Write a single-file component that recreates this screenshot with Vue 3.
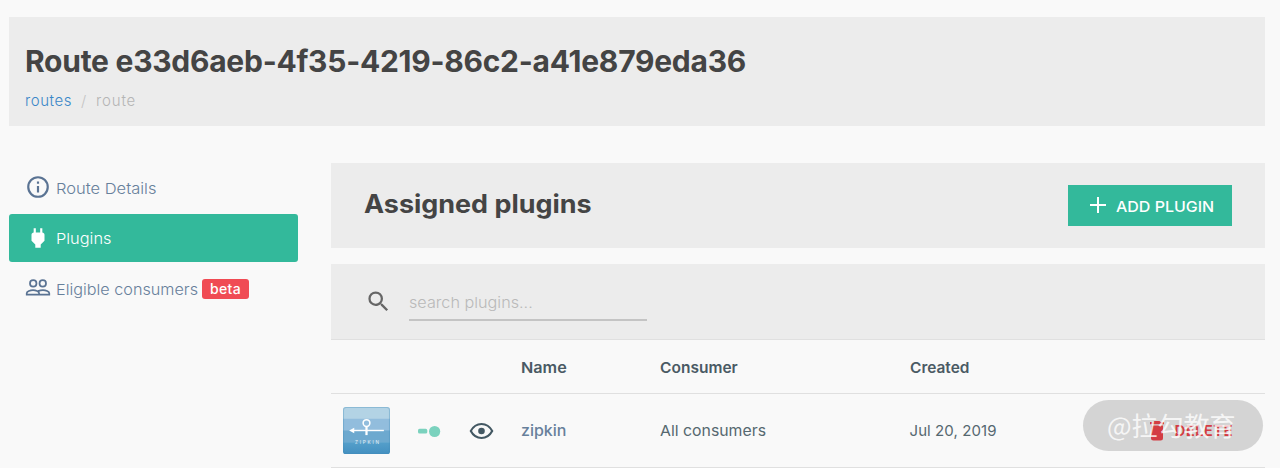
<script setup>
const columns = ['Name', 'Consumer', 'Created']
</script>

<template>
  <div class="page">
    <header class="page-head">
      <h1>Route e33d6aeb-4f35-4219-86c2-a41e879eda36</h1>
      <nav class="crumbs">
        <a class="crumb-link">routes</a>
        <span class="slash">/</span>
        <span class="crumb-current">route</span>
      </nav>
    </header>

    <div class="body">
      <aside class="side">
        <a class="item">
          <svg class="icon" viewBox="0 0 24 24">
            <path d="M11 17h2v-6h-2zM12 2a10 10 0 1 0 0 20 10 10 0 0 0 0-20zm0 18a8 8 0 1 1 0-16 8 8 0 0 1 0 16zM11 9h2V7h-2z" />
          </svg>
          <span class="label t-details">Route Details</span>
        </a>
        <a class="item active">
          <svg class="icon" viewBox="0 0 24 24">
            <path d="M16 7V3h-2v4h-4V3H8v4C7 7 6 8 6 9v5.500L9.500 18v3h5v-3l3.500-3.500V9c0-1-1-2-2-2z" />
          </svg>
          <span class="label t-plugins">Plugins</span>
        </a>
        <a class="item">
          <svg class="icon" viewBox="0 0 24 24" fill="none" stroke="currentColor" stroke-width="1.600">
            <circle cx="7.600" cy="7.800" r="3" />
            <circle cx="16.400" cy="7.800" r="3" />
            <path d="M1.600 18.200v-1.400c0-1.700 3.300-2.900 5.800-2.900s5.600 1.200 5.600 2.900v1.400zM13 18.200h9.400v-1.400c0-1.700-3.300-2.900-5.800-2.900-1.500 0-3.200.4-4.500 1" />
          </svg>
          <span class="label t-eligible">Eligible consumers</span>
          <span class="badge">beta</span>
        </a>
      </aside>

      <main class="main">
        <section class="panel-head">
          <h2>Assigned plugins</h2>
          <button class="add">
            <svg viewBox="0 0 16 16" fill="none" stroke="currentColor" stroke-width="2"><path d="M8 0v16M0 8h16" /></svg>
            <span>ADD PLUGIN</span>
          </button>
        </section>

        <section class="search">
          <svg class="glass" viewBox="0 0 24 24">
            <path d="M15.500 14h-.79l-.28-.27A6.470 6.470 0 0 0 16 9.500 6.500 6.500 0 1 0 9.500 16c1.610 0 3.090-.59 4.230-1.570l.27.28v.79l5 4.990L20.490 19l-4.990-5zm-6 0a4.500 4.500 0 1 1 0-9 4.500 4.500 0 0 1 0 9z" />
          </svg>
          <div class="field"><span>search plugins...</span></div>
        </section>

        <div class="row row-head">
          <span v-for="c in columns" :key="c" :class="'h-' + c.toLowerCase()">{{ c }}</span>
        </div>

        <div class="row row-data">
          <svg class="logo" viewBox="0 0 46 46">
            <defs>
              <clipPath id="logo-clip"><rect width="46" height="46" rx="2.500" /></clipPath>
              <linearGradient id="logo-base" x1="0" y1="0" x2="0" y2="1">
                <stop offset="0" stop-color="#559fca" /><stop offset="1" stop-color="#438fc0" />
              </linearGradient>
            </defs>
            <g clip-path="url(#logo-clip)">
              <rect width="46" height="12" fill="#b3d3e5" />
              <rect y="11.500" width="46" height="12" fill="#92bddd" />
              <rect y="23" width="46" height="12" fill="#6da9cf" />
              <rect y="34.500" width="46" height="12" fill="url(#logo-base)" />
            </g>
            <rect x=".5" y=".5" width="45" height="45" rx="2.500" fill="none" stroke="#418bb8" stroke-opacity=".35" />
            <g fill="none" stroke="#fff">
              <circle cx="23" cy="15.700" r="3.300" stroke-width="1.500" />
              <path d="M23 19v8.500" stroke-width="2.200" />
              <path d="M9 23h31" stroke-width="1.400" />
            </g>
            <path d="M6 23l5-2.800v5.600z" fill="#fff" />
            <text x="11.700" y="36.300" textLength="23.500" font-size="4.600" fill="#e3f1f8" font-family="Inter, sans-serif">ZIPKIN</text>
          </svg>
          <svg class="toggle" viewBox="0 0 24 14">
            <rect x="0" y="4.800" width="9.300" height="4.800" rx="1.600" />
            <circle cx="16.600" cy="7.500" r="5.600" />
          </svg>
          <svg class="eye" viewBox="0 0 24 18" fill="none" stroke="currentColor" stroke-width="2.100">
            <path d="M1.300 9C3.600 4.700 7.300 2 12 2s8.400 2.700 10.700 7c-2.300 4.300-6 7-10.700 7S3.600 13.300 1.300 9z" />
            <circle cx="12" cy="9" r="3.300" fill="currentColor" stroke="none" />
          </svg>
          <span class="d-name">zipkin</span>
          <span class="d-consumer">All consumers</span>
          <span class="d-created">Jul 20, 2019</span>
          <a class="delete">
            <svg viewBox="0 0 14 20"><path d="M4.500 0h5l1 1H14v2.300H0V1h3.500zM1 4.500h12V17q0 2.500-2.500 2.500h-7Q1 19.500 1 17z" /></svg>
            <span>DELETE</span>
          </a>
          <div class="pill"></div>
          <div class="mark">@拉勾教育</div>
        </div>
      </main>
    </div>
  </div>
</template>

<style>
body { background: #f9f9f9; }
</style>

<style scoped>
.page {
  box-sizing: border-box;
  width: 1280px;
  height: 468px;
  overflow: hidden;
  padding: 17px 15px 0 9px;
  background: #f9f9f9;
  font-family: Inter, "Noto Sans CJK SC", sans-serif;
  font-size: 15px;
  color: #566870;
  white-space: nowrap;
}
.page-head {
  box-sizing: border-box;
  height: 109px;
  padding: 24px 16px 0;
  background: #ececec;
}
h1, h2 { margin: 0; color: #444; font-weight: 700; }
h1 { font-size: 30px; line-height: 40px; letter-spacing: -.26px; }
.crumbs { display: flex; margin-top: 10px; line-height: 20px; font-weight: 300; }
.crumb-link { color: #3a87c8; width: 56px; letter-spacing: .55px; }
.slash { color: #c4c4c4; width: 15px; }
.crumb-current { color: #b5b5b5; letter-spacing: .85px; }

.body { display: flex; gap: 33px; margin-top: 37px; }
.side { width: 289px; }
.item {
  box-sizing: border-box;
  display: flex;
  align-items: center;
  height: 48px;
  margin-bottom: 2.500px;
  padding-left: 16px;
  border-radius: 3px;
  color: #67809b;
  font-weight: 300;
}
.icon { width: 26px; height: 26px; margin-right: 5px; fill: #5a7393; color: #5a7393; }
.icon[fill="none"] { fill: none; }
.active { background: #33b99b; color: #fff; }
.active .icon { fill: #fff; }
.label { padding-top: 2px; transform-origin: left; }
.t-details { transform: scaleX(1.1); }
.t-plugins { transform: scaleX(1.09); }
.t-eligible { width: 142px; transform: scaleX(1.08); }
.badge {
  box-sizing: border-box;
  width: 47px;
  height: 20px;
  margin: 1px 0 0 4px;
  border-radius: 3px;
  background: #f04b54;
  color: #fff;
  font-size: 14px;
  font-weight: 500;
  line-height: 20px;
  letter-spacing: .3px;
  text-align: center;
}

.main { width: 934px; }
.panel-head {
  box-sizing: border-box;
  display: flex;
  align-items: center;
  justify-content: space-between;
  height: 85px;
  padding: 0 33px;
  background: #ececec;
}
h2 {
  margin-top: -3px;
  font-size: 25px;
  line-height: 32px;
  transform: scaleX(1.077);
  transform-origin: left;
}
.add {
  display: flex;
  align-items: center;
  width: 164px;
  height: 41px;
  padding: 0 0 0 22px;
  border: 0;
  background: #33b99b;
  color: #fff;
  font: 500 15px Inter, sans-serif;
}
.add svg { width: 16px; height: 16px; margin: 0 10px 1px 0; }
.add span { padding-top: 1px; transform: scaleX(1.065); transform-origin: left; }
.search {
  box-sizing: border-box;
  display: flex;
  height: 75px;
  margin-top: 16px;
  padding-left: 34px;
  background: #ececec;
}
.glass { width: 27px; height: 27px; margin: 24px 17px 0 0; fill: #666; }
.field {
  box-sizing: border-box;
  width: 238px;
  height: 57px;
  padding-top: 29px;
  border-bottom: 2px solid #c4c4c4;
  line-height: 20px;
  color: #b9b9b9;
  font-weight: 300;
}
.field span { display: inline-block; transform: scaleX(1.08); transform-origin: left; }
.row {
  box-sizing: border-box;
  display: grid;
  align-items: center;
  grid-template-columns: 75px 51px 52px 138.500px 250px 240px 1fr;
  padding-left: 12px;
}
.row-head {
  height: 54px;
  padding-top: 1px;
  border-top: 1px solid #e0e0e0;
  color: #4a5a64;
  font-weight: 600;
}
.row span { transform-origin: left; }
.row-head > :first-child { grid-column: 4; }
.h-name { transform: scaleX(1.08); }
.h-consumer { transform: scaleX(1.035); }
.h-created { transform: scaleX(1.03); }
.row-data {
  position: relative;
  height: 75px;
  border-top: 1px solid #e0e0e0;
  border-bottom: 1px solid #e0e0e0;
  font-weight: 400;
}
.logo { width: 47px; height: 47px; }
.toggle { width: 24px; height: 14px; fill: #7bd2be; }
.eye { width: 25px; height: 18px; color: #435863; }
.d-name { color: #67809b; font-weight: 500; transform: scaleX(1.065); }
.d-consumer { transform: scaleX(1.055); }
.d-created { letter-spacing: .08px; }
.delete {
  position: relative;
  z-index: 1;
  display: flex;
  align-items: center;
  color: #d33c43;
  font-weight: 600;
  letter-spacing: .3px;
}
.delete svg { width: 14px; height: 20px; margin-right: 11px; fill: currentColor; }
.pill, .mark {
  position: absolute;
  box-sizing: border-box;
  left: 752px;
  top: 6px;
  width: 180px;
  height: 51px;
  border-radius: 26px;
}
.pill { background: #d4d4d4; }
.mark {
  z-index: 2;
  padding-left: 24px;
  color: rgba(255, 255, 255, .8);
  font: 400 26px/49px "Noto Sans CJK SC", sans-serif;
}
</style>
